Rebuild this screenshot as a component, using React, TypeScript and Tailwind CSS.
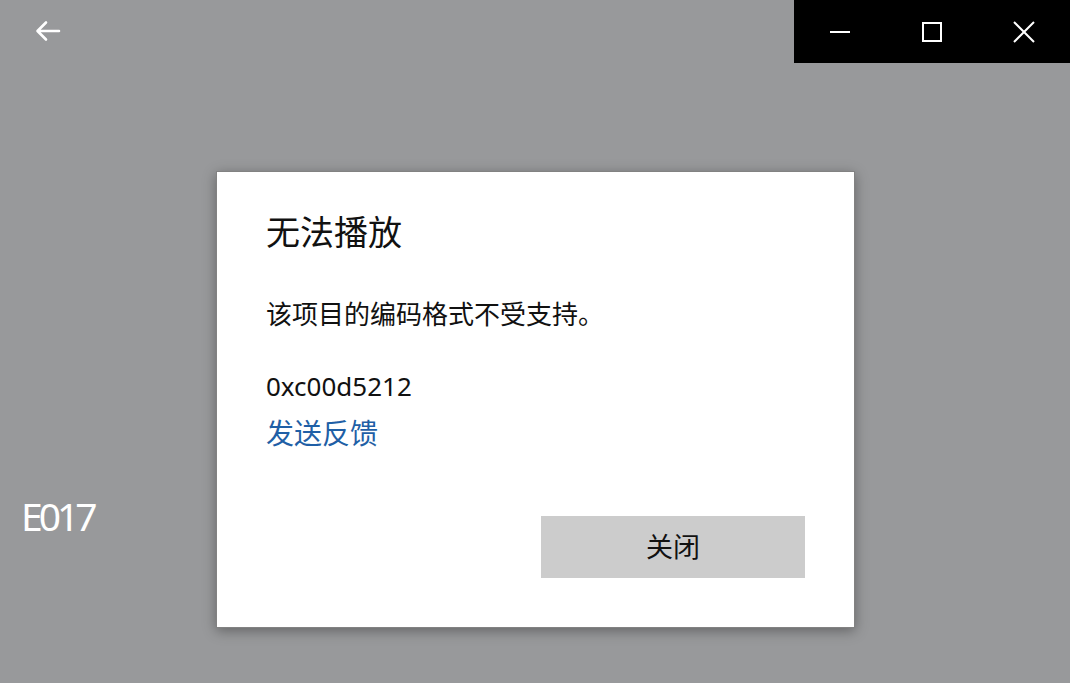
import React from "react";

const font = { fontFamily: '"Noto Sans", "Noto Sans CJK SC", sans-serif' };

export default function App() {
  return (
    <div
      className="w-[1070px] h-[683px] bg-[#98999b] flex flex-col overflow-hidden"
      style={font}
    >
      {/* top bar */}
      <div className="h-[63px] flex justify-between items-stretch">
        <div className="pl-[35px] pt-[20px]">
          <svg width="26" height="22" viewBox="0 0 26 22" fill="none">
            <path
              d="M24 11H3M11 2.5L2.5 11L11 19.5"
              stroke="#ffffff"
              strokeWidth="2.6"
              strokeLinecap="round"
              strokeLinejoin="round"
            />
          </svg>
        </div>
        <div className="w-[276px] bg-black flex">
          <div className="w-[92px] flex items-center justify-center">
            <svg width="22" height="4" viewBox="0 0 22 4">
              <path d="M1 2H21" stroke="#ffffff" strokeWidth="2" />
            </svg>
          </div>
          <div className="w-[92px] flex items-center justify-center">
            <svg width="22" height="22" viewBox="0 0 22 22" fill="none">
              <rect x="2" y="2" width="18" height="18" stroke="#ffffff" strokeWidth="2" />
            </svg>
          </div>
          <div className="w-[92px] flex items-center justify-center">
            <svg width="24" height="24" viewBox="0 0 24 24" fill="none">
              <path d="M2 2L22 22M22 2L2 22" stroke="#ffffff" strokeWidth="2" />
            </svg>
          </div>
        </div>
      </div>

      {/* body */}
      <div className="flex flex-1">
        <div className="w-[216px] pl-[21px] pt-[431px]">
          <div className="text-white text-[39px] leading-[44px] tracking-[-4px]">E017</div>
        </div>
        <div className="mt-[108px] w-[639px] h-[457px] bg-white border border-[#828282] shadow-[0_3px_12px_rgba(0,0,0,0.35)] flex flex-col pl-[49px] pt-[38px] pr-[49px] pb-[49px] text-[#111]">
          <div className="text-[34px] leading-[44px]">无法播放</div>
          <div className="mt-[42px] text-[26px] leading-[36px]">该项目的编码格式不受支持。</div>
          <div className="mt-[36px] text-[26px] leading-[36px]">0xc00d5212</div>
          <div className="mt-[10px] text-[28px] leading-[38px] text-[#1f5fa6]">发送反馈</div>
          <div className="mt-auto self-end w-[264px] h-[62px] bg-[#cccccc] flex items-center justify-center text-[27px] leading-[36px]">
            关闭
          </div>
        </div>
      </div>
    </div>
  );
}
